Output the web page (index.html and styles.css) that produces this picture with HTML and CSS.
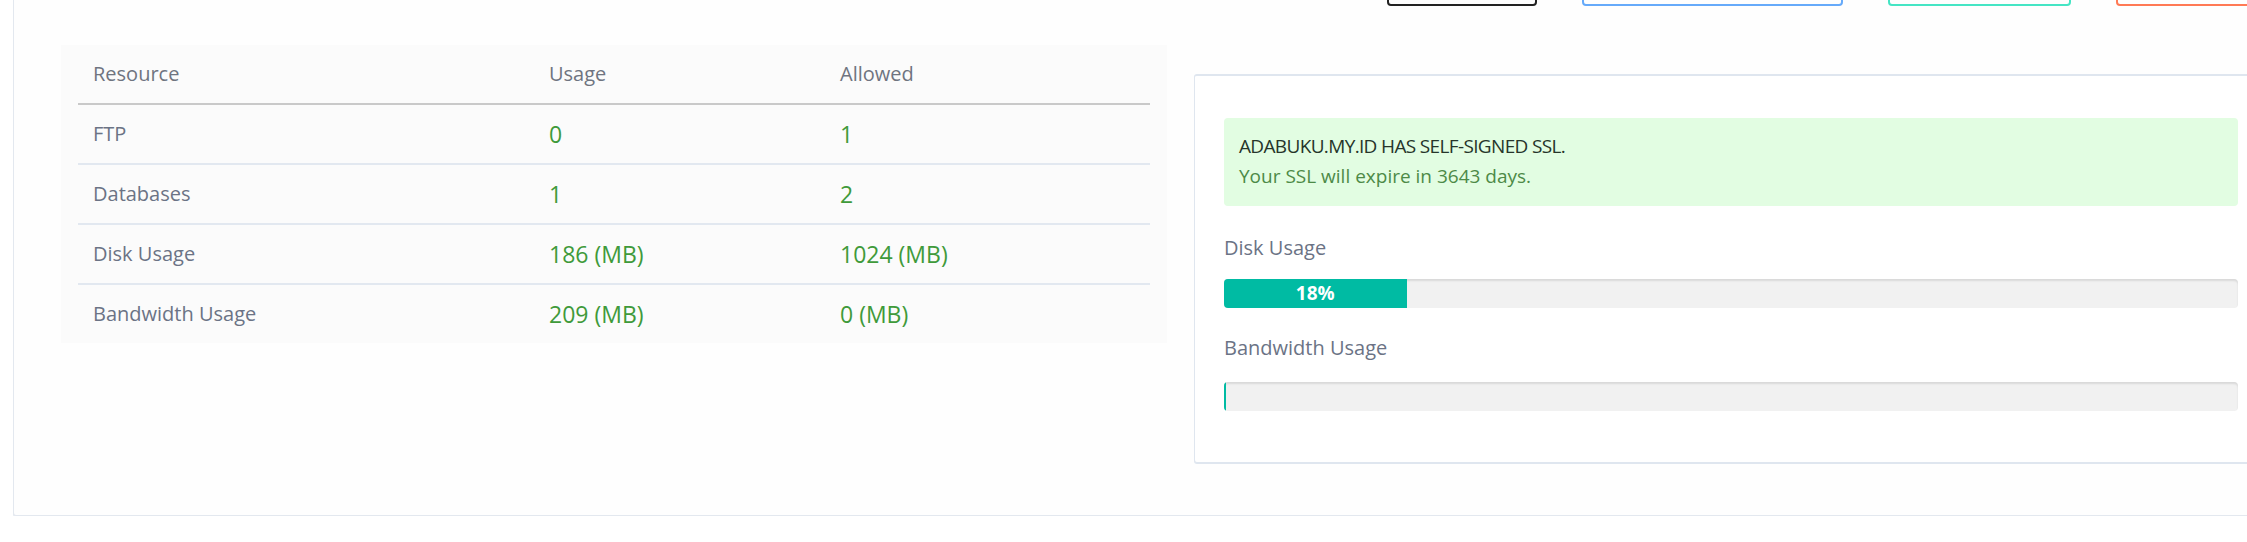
FILE: index.html
```html
<!DOCTYPE html>
<html lang="en">
<head>
<meta charset="utf-8">
<title>Account usage</title>
<link rel="stylesheet" href="styles.css">
</head>
<body>
<div class="page">
  <section class="panel">
    <div class="toolbar">
      <button class="btn btn-dark" type="button"></button>
      <button class="btn btn-blue" type="button"></button>
      <button class="btn btn-teal" type="button"></button>
      <button class="btn btn-orange" type="button"></button>
    </div>

    <div class="panel-body">
      <div class="usage">
        <table class="usage-table">
          <colgroup>
            <col class="col-name">
            <col class="col-used">
            <col class="col-allowed">
          </colgroup>
          <thead>
            <tr><th>Resource</th><th>Usage</th><th>Allowed</th></tr>
          </thead>
          <tbody>
            <tr><td>FTP</td><td class="num">0</td><td class="num">1</td></tr>
            <tr><td>Databases</td><td class="num">1</td><td class="num">2</td></tr>
            <tr><td>Disk Usage</td><td class="num">186 (MB)</td><td class="num">1024 (MB)</td></tr>
            <tr><td>Bandwidth Usage</td><td class="num">209 (MB)</td><td class="num">0 (MB)</td></tr>
          </tbody>
        </table>
      </div>

      <div class="status-card">
        <div class="alert">
          <div class="alert-title">ADABUKU.MY.ID HAS SELF-SIGNED SSL.</div>
          <div class="alert-text">Your SSL will expire in 3643 days.</div>
        </div>

        <div class="meter-label">Disk Usage</div>
        <div class="meter">
          <div class="meter-fill" style="width:18%">18%</div>
        </div>

        <div class="meter-label">Bandwidth Usage</div>
        <div class="meter">
          <div class="meter-fill" style="width:0%"></div>
        </div>
      </div>
    </div>
  </section>
</div>
</body>
</html>
```

FILE: styles.css
```css
html, body {
  margin: 0;
  padding: 0;
  overflow: hidden;
  background: #ffffff;
}

body {
  font-family: "Open Sans", "Liberation Sans", sans-serif;
  color: #6b7383;
}

.page {
  width: 2400px;
  padding-left: 13px;
}

.panel {
  width: 2238px;
  margin-top: -56px;
  padding: 16px 47px 52px 47px;
  background: #fefefe;
  border: 1px solid #e3e8ef;
  border-radius: 3px;
  box-shadow: 0 1px 0 #e3e8ef;
}

.toolbar {
  display: flex;
  justify-content: flex-end;
  gap: 45px;
  margin-bottom: 39px;
}

.btn {
  height: 45px;
  background: transparent;
  border: 2px solid #222;
  border-radius: 4px;
  padding: 0;
}
.btn-dark   { width: 150px; border-color: #222222; }
.btn-blue   { width: 261px; border-color: #66aafa; }
.btn-teal   { width: 183px; border-color: #45e5c4; }
.btn-orange { width: 183px; border-color: #ff7a55; }

.panel-body {
  display: grid;
  grid-template-columns: 1106px 1074px;
  column-gap: 27px;
  align-items: start;
}

/* resource table */
.usage {
  background: #fbfbfb;
  padding: 0 17px;
}

.usage-table {
  width: 100%;
  border-collapse: collapse;
  font-size: 20px;
  line-height: 28px;
}

.col-name    { width: 456px; }
.col-used    { width: 291px; }
.col-allowed { width: 325px; }

.usage-table th {
  text-align: left;
  font-weight: 400;
  color: #6f7480;
  padding: 15px 15px;
  border-bottom: 2px solid #c9c9c9;
}

.usage-table td {
  padding: 15px 15px;
  color: #6b7385;
  border-bottom: 2px solid #e2e8f0;
}

.usage-table tbody tr:last-child td {
  border-bottom: 0;
}

.usage-table td.num {
  color: #3f9a3a;
  font-size: 23px;
}

/* right-hand status card */
.status-card {
  margin-top: 29px;
  background: #ffffff;
  border: 1px solid #dfe6ef;
  border-top-width: 2px;
  border-radius: 3px;
  box-shadow: 0 1px 0 #dfe6ef;
  padding: 42px 29px 25px 29px;
}

.alert {
  background: #e2fde2;
  border-radius: 4px;
  padding: 13px 15px 15px 15px;
  font-size: 19px;
  line-height: 30px;
  margin-bottom: 28px;
}

.alert-title {
  color: #26352a;
  letter-spacing: -0.65px;
}

.alert-text {
  color: #4d8a47;
}

.meter-label {
  font-size: 20px;
  line-height: 28px;
  color: #6b7385;
  margin-bottom: 17px;
}

.meter + .meter-label {
  margin-bottom: 20px;
}

.meter {
  height: 29px;
  background: #f1f1f1;
  border-radius: 4px;
  box-shadow: inset 0 2px 2px rgba(0, 0, 0, 0.1);
  overflow: hidden;
  margin-bottom: 26px;
}

.meter-fill {
  height: 100%;
  min-width: 2px;
  background: #00bba3;
  color: #ffffff;
  font-weight: 700;
  font-size: 19px;
  line-height: 29px;
  text-align: center;
}
```
